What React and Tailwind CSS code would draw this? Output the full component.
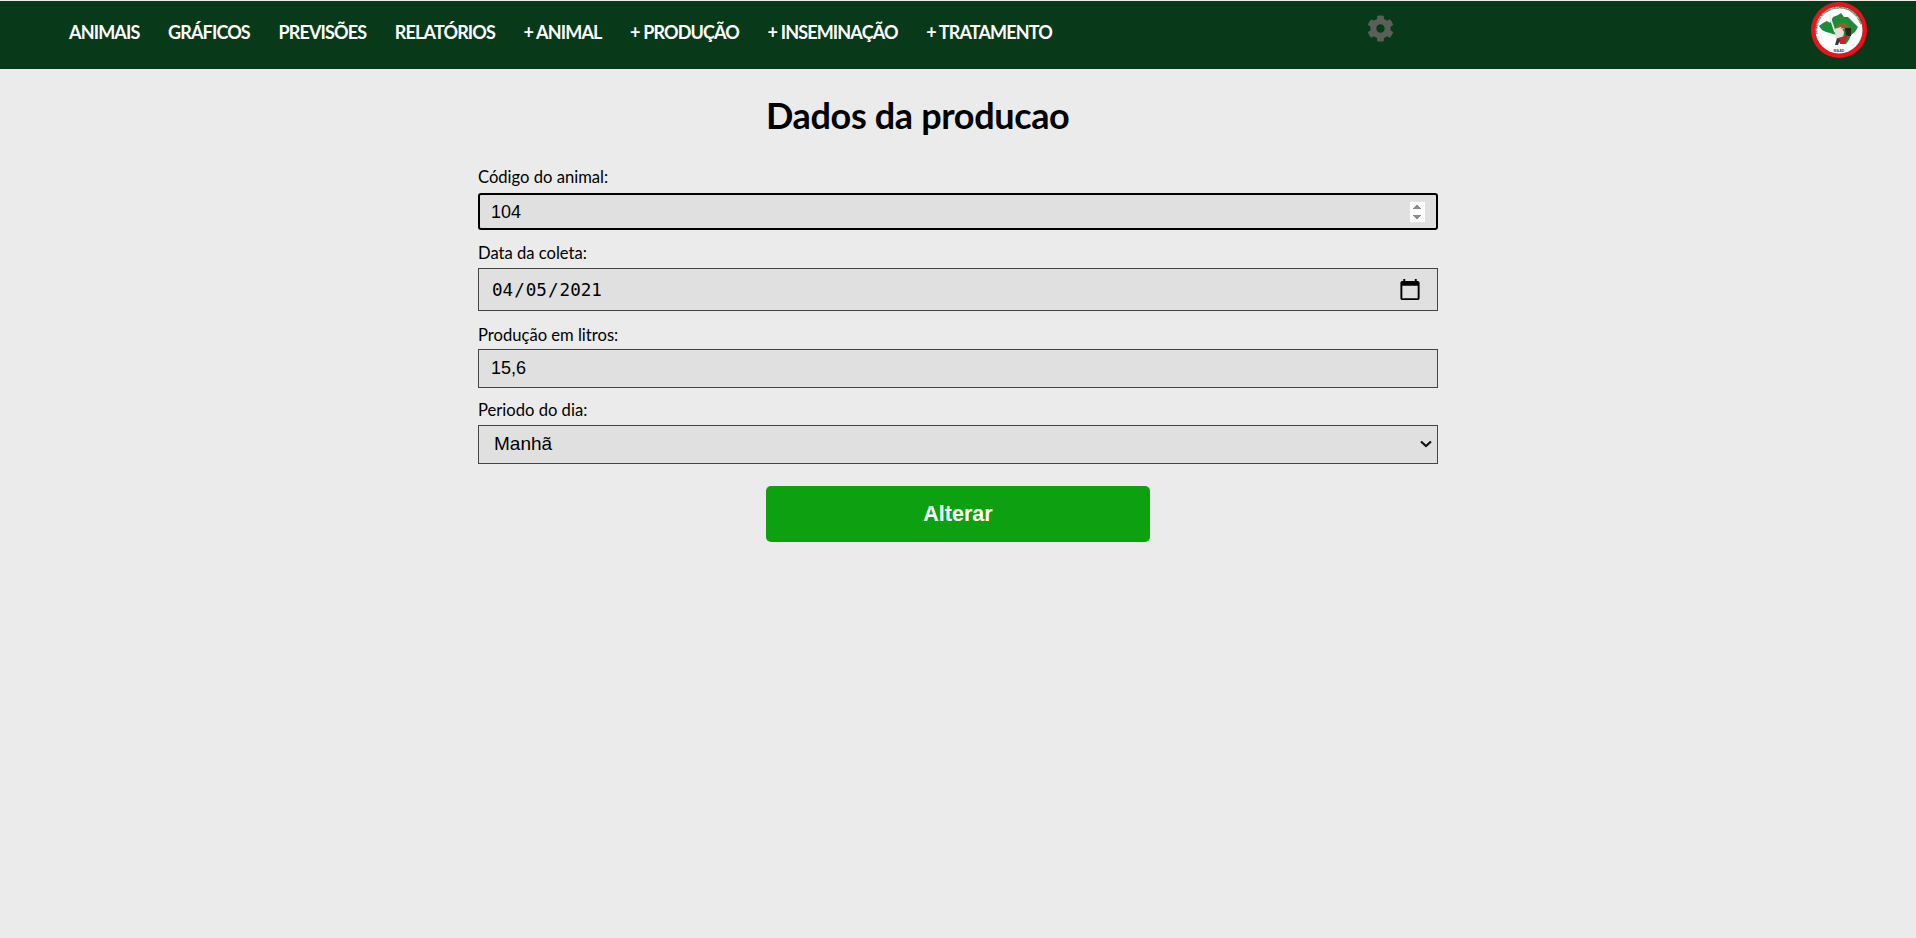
import React from "react";
import { FaCog } from "react-icons/fa";

const links = ["ANIMAIS", "GRÁFICOS", "PREVISÕES", "RELATÓRIOS", "+ ANIMAL", "+ PRODUÇÃO", "+ INSEMINAÇÃO", "+ TRATAMENTO"];

function Logo() {
  return (
    <svg width="56" height="56" viewBox="0 0 56 56" className="block">
      <defs>
        <path id="ring" d="M6.5 32 A21.8 21.8 0 1 1 49.5 32" fill="none" />
      </defs>
      <circle cx="28" cy="28" r="28" fill="#e8141c" />
      <circle cx="28" cy="28" r="23.5" fill="#ffffff" />
      <text fontSize="3.4" fontWeight="700" fill="#2c5a35" fontFamily="Liberation Sans, sans-serif">
        <textPath href="#ring" textLength="66">MOVIMENTO DOS TRABALHADORES RURAIS SEM TERRA</textPath>
      </text>
      <path d="M8 24 L12 21 L16 19 L19 21 L22 15 L27 13 L30 11 L33 15 L37 15 L41 19 L45 23 L47 25 L44 30 L40 33 L38 38 L35 42 L31 42 L27 38 L25 33 L19 31 L15 30 L11 28 Z" fill="#1f8a38" />
      <path d="M18 12 L24 30" stroke="#eeeeee" strokeWidth="1.6" />
      <path d="M23 27 L30 25 L33 30 L32 36 L25 36 Z" fill="#e4e0da" />
      <path d="M25 25 H38 L34 21 H29 Z" fill="#a5562c" />
      <path d="M34 26 H40 V34 H35 Z" fill="#2a2420" />
      <path d="M29 26 a3 3 0 0 0 5 0 Z" fill="#c9a27c" />
      <path d="M27 36 L37 33 L33 42 L29 42 Z" fill="#c8232a" />
      <path d="M26 36 L24 43 H27 L29 38 Z" fill="#3a3a3a" />
      <text x="28" y="50" fontSize="3.6" fontWeight="700" fill="#444" textAnchor="middle" fontFamily="Liberation Sans, sans-serif">MAAD</text>
    </svg>
  );
}

function Label({ children, className }) {
  return <label className={"block text-[16.6px] leading-[19px] text-black " + className}>{children}</label>;
}

const fieldCls = "block w-full bg-[#e0e0e0] border border-[#444444] text-black outline-none";

export default function App() {
  return (
    <div className="min-h-[938px] bg-[#ebebeb] pt-px font-['Lato',sans-serif]">
      <nav className="h-[68px] bg-[#083a19] flex relative">
        <ul className="flex pl-[69px] pt-[20px] gap-[28.5px]">
          {links.map((l) => (
            <li key={l} className="text-[18px] leading-[22px] font-bold text-white tracking-[-0.85px] whitespace-nowrap">{l}</li>
          ))}
        </ul>
        <FaCog className="absolute left-[1367px] top-[14px] text-[#5a5f5b]" size={27} />
        <div className="absolute left-[1811px] top-[1px]"><Logo /></div>
      </nav>
      <main className="w-[960px] ml-[478px]">
        <h1 className="text-[36px] leading-[44px] font-bold text-black mt-[24px] mb-[31px] ml-[288px] tracking-[-0.35px] whitespace-nowrap">Dados da producao</h1>
        <Label>Código do animal:</Label>
        <input
          autoFocus
          type="number"
          defaultValue="104"
          className={fieldCls + " h-[37px] mt-[6px] pt-[2px] px-[11px] rounded-[3px] border-2 border-black font-['Liberation_Sans',sans-serif] text-[18px] [&::-webkit-inner-spin-button]:opacity-100"}
        />
        <Label className="mt-[14px]">Data da coleta:</Label>
        <input
          type="date"
          defaultValue="2021-04-05"
          className={fieldCls + " h-[43px] mt-[5px] pt-[2px] px-3 font-['DejaVu_Sans_Mono',monospace] text-[17.6px] [&::-webkit-calendar-picker-indicator]:w-[24px] [&::-webkit-calendar-picker-indicator]:h-[24px] [&::-webkit-calendar-picker-indicator]:p-0 [&::-webkit-calendar-picker-indicator]:m-0 [&::-webkit-calendar-picker-indicator]:mr-[3px]"}
        />
        <Label className="mt-[15px]">Produção em litros:</Label>
        <input
          type="text"
          defaultValue="15,6"
          className={fieldCls + " h-[39px] mt-[4px] px-3 font-['Liberation_Sans',sans-serif] text-[18px]"}
        />
        <Label className="mt-[13px]">Periodo do dia:</Label>
        <div className="relative mt-[5px]">
          <select defaultValue="Manhã" className={fieldCls + " appearance-none h-[39px] pl-[15px] pr-3 font-['Liberation_Sans',sans-serif] text-[19px]"}>
            <option>Manhã</option>
            <option>Tarde</option>
          </select>
          <svg width="12" height="8" viewBox="0 0 12 8" className="absolute left-[942px] top-[15px]">
            <path d="M1 1.5 L6 6 L11 1.5" fill="none" stroke="#111111" strokeWidth="2.2" />
          </svg>
        </div>
        <button className="block w-[384px] h-[56px] mt-[22px] ml-[288px] rounded-[5px] bg-[#0da010] text-white font-bold text-[21.5px] font-['Liberation_Sans',sans-serif]">Alterar</button>
      </main>
    </div>
  );
}
